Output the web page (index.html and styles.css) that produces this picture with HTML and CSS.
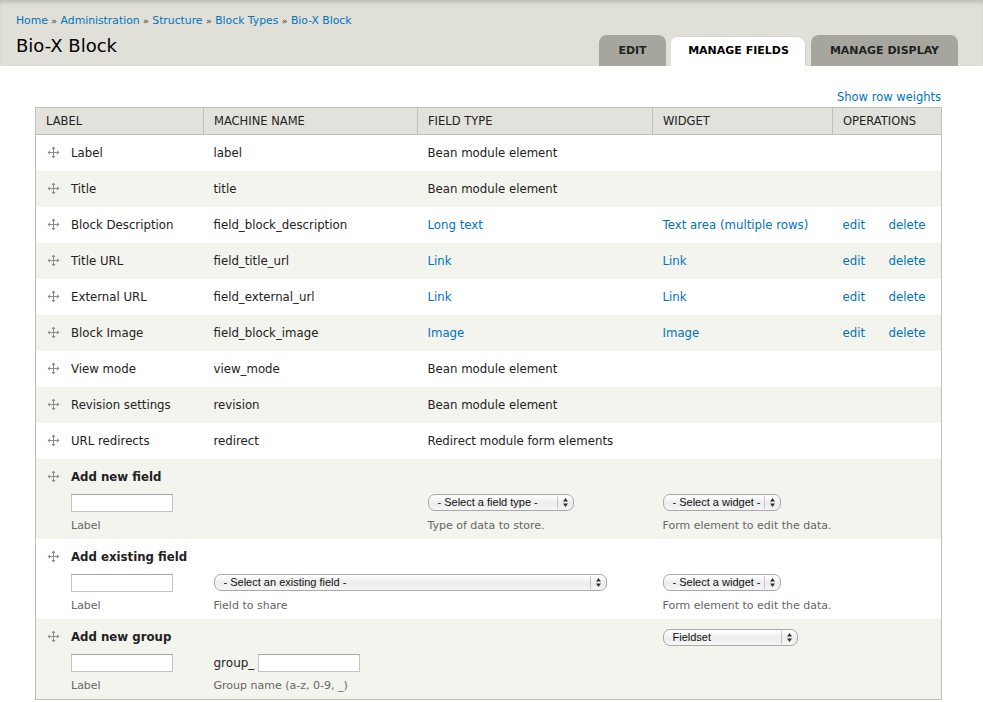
FILE: index.html
```html
<!DOCTYPE html>
<html lang="en">
<head>
<meta charset="utf-8">
<title>Bio-X Block</title>
<link rel="stylesheet" href="styles.css">
</head>
<body>
<header class="head">
  <div class="head-left">
    <nav class="crumbs"><a href="#">Home</a> <span class="sep">»</span> <a href="#">Administration</a> <span class="sep">»</span> <a href="#">Structure</a> <span class="sep">»</span> <a href="#">Block Types</a> <span class="sep">»</span> <a href="#">Bio-X Block</a></nav>
    <h1 class="title">Bio-X Block</h1>
  </div>
  <ul class="tabs">
    <li class="tab t-edit">EDIT</li>
    <li class="tab t-fields active">MANAGE FIELDS</li>
    <li class="tab t-display">MANAGE DISPLAY</li>
  </ul>
</header>
<main class="content">
  <div class="weights"><a href="#">Show row weights</a></div>
  <table class="fields">
    <colgroup><col class="c1"><col class="c2"><col class="c3"><col class="c4"><col class="c5"><col class="c6"></colgroup>
    <thead>
      <tr><th>LABEL</th><th>MACHINE NAME</th><th>FIELD TYPE</th><th>WIDGET</th><th colspan="2">OPERATIONS</th></tr>
    </thead>
    <tbody>
      <tr class="row odd"><td><span class="drag"><svg width="13" height="13" viewBox="0 0 13 13"><path d="M6.5 2.5v8M2.5 6.5h8" stroke="#8c8c8c" stroke-width="1"/><path d="M6.5 0.5L4.5 3h4zM6.5 12.5L4.5 10h4zM0.5 6.5L3 4.5v4zM12.5 6.5L10 4.5v4z" fill="#8c8c8c"/></svg></span>Label</td><td>label</td><td>Bean module element</td><td></td><td></td><td></td></tr>
      <tr class="row even"><td><span class="drag"><svg width="13" height="13" viewBox="0 0 13 13"><path d="M6.5 2.5v8M2.5 6.5h8" stroke="#8c8c8c" stroke-width="1"/><path d="M6.5 0.5L4.5 3h4zM6.5 12.5L4.5 10h4zM0.5 6.5L3 4.5v4zM12.5 6.5L10 4.5v4z" fill="#8c8c8c"/></svg></span>Title</td><td>title</td><td>Bean module element</td><td></td><td></td><td></td></tr>
      <tr class="row odd"><td><span class="drag"><svg width="13" height="13" viewBox="0 0 13 13"><path d="M6.5 2.5v8M2.5 6.5h8" stroke="#8c8c8c" stroke-width="1"/><path d="M6.5 0.5L4.5 3h4zM6.5 12.5L4.5 10h4zM0.5 6.5L3 4.5v4zM12.5 6.5L10 4.5v4z" fill="#8c8c8c"/></svg></span>Block Description</td><td>field_block_description</td><td><a href="#">Long text</a></td><td><a href="#">Text area (multiple rows)</a></td><td><a href="#">edit</a></td><td><a href="#">delete</a></td></tr>
      <tr class="row even"><td><span class="drag"><svg width="13" height="13" viewBox="0 0 13 13"><path d="M6.5 2.5v8M2.5 6.5h8" stroke="#8c8c8c" stroke-width="1"/><path d="M6.5 0.5L4.5 3h4zM6.5 12.5L4.5 10h4zM0.5 6.5L3 4.5v4zM12.5 6.5L10 4.5v4z" fill="#8c8c8c"/></svg></span>Title URL</td><td>field_title_url</td><td><a href="#">Link</a></td><td><a href="#">Link</a></td><td><a href="#">edit</a></td><td><a href="#">delete</a></td></tr>
      <tr class="row odd"><td><span class="drag"><svg width="13" height="13" viewBox="0 0 13 13"><path d="M6.5 2.5v8M2.5 6.5h8" stroke="#8c8c8c" stroke-width="1"/><path d="M6.5 0.5L4.5 3h4zM6.5 12.5L4.5 10h4zM0.5 6.5L3 4.5v4zM12.5 6.5L10 4.5v4z" fill="#8c8c8c"/></svg></span>External URL</td><td>field_external_url</td><td><a href="#">Link</a></td><td><a href="#">Link</a></td><td><a href="#">edit</a></td><td><a href="#">delete</a></td></tr>
      <tr class="row even"><td><span class="drag"><svg width="13" height="13" viewBox="0 0 13 13"><path d="M6.5 2.5v8M2.5 6.5h8" stroke="#8c8c8c" stroke-width="1"/><path d="M6.5 0.5L4.5 3h4zM6.5 12.5L4.5 10h4zM0.5 6.5L3 4.5v4zM12.5 6.5L10 4.5v4z" fill="#8c8c8c"/></svg></span>Block Image</td><td>field_block_image</td><td><a href="#">Image</a></td><td><a href="#">Image</a></td><td><a href="#">edit</a></td><td><a href="#">delete</a></td></tr>
      <tr class="row odd"><td><span class="drag"><svg width="13" height="13" viewBox="0 0 13 13"><path d="M6.5 2.5v8M2.5 6.5h8" stroke="#8c8c8c" stroke-width="1"/><path d="M6.5 0.5L4.5 3h4zM6.5 12.5L4.5 10h4zM0.5 6.5L3 4.5v4zM12.5 6.5L10 4.5v4z" fill="#8c8c8c"/></svg></span>View mode</td><td>view_mode</td><td>Bean module element</td><td></td><td></td><td></td></tr>
      <tr class="row even"><td><span class="drag"><svg width="13" height="13" viewBox="0 0 13 13"><path d="M6.5 2.5v8M2.5 6.5h8" stroke="#8c8c8c" stroke-width="1"/><path d="M6.5 0.5L4.5 3h4zM6.5 12.5L4.5 10h4zM0.5 6.5L3 4.5v4zM12.5 6.5L10 4.5v4z" fill="#8c8c8c"/></svg></span>Revision settings</td><td>revision</td><td>Bean module element</td><td></td><td></td><td></td></tr>
      <tr class="row odd"><td><span class="drag"><svg width="13" height="13" viewBox="0 0 13 13"><path d="M6.5 2.5v8M2.5 6.5h8" stroke="#8c8c8c" stroke-width="1"/><path d="M6.5 0.5L4.5 3h4zM6.5 12.5L4.5 10h4zM0.5 6.5L3 4.5v4zM12.5 6.5L10 4.5v4z" fill="#8c8c8c"/></svg></span>URL redirects</td><td>redirect</td><td>Redirect module form elements</td><td></td><td></td><td></td></tr>

      <tr class="add even">
        <td>
          <div class="add-title"><span class="drag"><svg width="13" height="13" viewBox="0 0 13 13"><path d="M6.5 2.5v8M2.5 6.5h8" stroke="#8c8c8c" stroke-width="1"/><path d="M6.5 0.5L4.5 3h4zM6.5 12.5L4.5 10h4zM0.5 6.5L3 4.5v4zM12.5 6.5L10 4.5v4z" fill="#8c8c8c"/></svg></span>Add new field</div>
          <div class="indent"><input class="txt" type="text"><div class="desc">Label</div></div>
        </td>
        <td></td>
        <td class="ctl"><span class="sel w146"><select><option>- Select a field type -</option></select><svg class="arr" width="5" height="9" viewBox="0 0 5 9"><path d="M2.5 0L0 3.5h5zM2.5 9L0 5.5h5z" fill="#333"/></svg></span><div class="desc">Type of data to store.</div></td>
        <td class="ctl"><span class="sel w118"><select><option>- Select a widget -</option></select><svg class="arr" width="5" height="9" viewBox="0 0 5 9"><path d="M2.5 0L0 3.5h5zM2.5 9L0 5.5h5z" fill="#333"/></svg></span><div class="desc">Form element to edit the data.</div></td>
        <td></td><td></td>
      </tr>
      <tr class="add odd">
        <td>
          <div class="add-title"><span class="drag"><svg width="13" height="13" viewBox="0 0 13 13"><path d="M6.5 2.5v8M2.5 6.5h8" stroke="#8c8c8c" stroke-width="1"/><path d="M6.5 0.5L4.5 3h4zM6.5 12.5L4.5 10h4zM0.5 6.5L3 4.5v4zM12.5 6.5L10 4.5v4z" fill="#8c8c8c"/></svg></span>Add existing field</div>
          <div class="indent"><input class="txt" type="text"><div class="desc">Label</div></div>
        </td>
        <td class="ctl" colspan="2"><span class="sel w393"><select><option>- Select an existing field -</option></select><svg class="arr" width="5" height="9" viewBox="0 0 5 9"><path d="M2.5 0L0 3.5h5zM2.5 9L0 5.5h5z" fill="#333"/></svg></span><div class="desc">Field to share</div></td>
        <td class="ctl"><span class="sel w118"><select><option>- Select a widget -</option></select><svg class="arr" width="5" height="9" viewBox="0 0 5 9"><path d="M2.5 0L0 3.5h5zM2.5 9L0 5.5h5z" fill="#333"/></svg></span><div class="desc">Form element to edit the data.</div></td>
        <td></td><td></td>
      </tr>
      <tr class="add even">
        <td>
          <div class="add-title"><span class="drag"><svg width="13" height="13" viewBox="0 0 13 13"><path d="M6.5 2.5v8M2.5 6.5h8" stroke="#8c8c8c" stroke-width="1"/><path d="M6.5 0.5L4.5 3h4zM6.5 12.5L4.5 10h4zM0.5 6.5L3 4.5v4zM12.5 6.5L10 4.5v4z" fill="#8c8c8c"/></svg></span>Add new group</div>
          <div class="indent"><input class="txt" type="text"><div class="desc">Label</div></div>
        </td>
        <td class="ctl" colspan="2"><div class="prefixed"><span class="prefix">group_</span><input class="txt" type="text"></div><div class="desc">Group name (a-z, 0-9, _)</div></td>
        <td class="ctl top"><span class="sel w135"><select><option>Fieldset</option></select><svg class="arr" width="5" height="9" viewBox="0 0 5 9"><path d="M2.5 0L0 3.5h5zM2.5 9L0 5.5h5z" fill="#333"/></svg></span></td>
        <td></td><td></td>
      </tr>
    </tbody>
  </table>
</main>
</body>
</html>
```

FILE: styles.css
```css
html, body {
  margin: 0;
  padding: 0;
  background: #fff;
}
body {
  font-family: "DejaVu Sans", Verdana, sans-serif;
  font-size: 11.75px;
  color: #222;
}
a {
  color: #0074bd;
  text-decoration: none;
}

/* Header */
.head {
  height: 66px;
  background: #e0e0d8;
  box-shadow: inset 0 4px 4px -2px rgba(0, 0, 0, 0.18);
  display: flex;
  justify-content: space-between;
  align-items: flex-end;
  padding: 0 25px 0 16px;
}
.head-left {
  align-self: flex-start;
}
.crumbs {
  padding-top: 14px;
  line-height: 14px;
  font-size: 10.8px;
}
.crumbs .sep {
  color: #4a3a20;
  font-size: 9.5px;
}
.title {
  margin: 6px 0 0;
  font-size: 18px;
  font-weight: normal;
  line-height: 24px;
  color: #000;
}
.tabs {
  list-style: none;
  margin: 0;
  padding: 0;
  display: flex;
  gap: 5px;
  align-items: flex-end;
}
.tab {
  height: 31px;
  line-height: 32px;
  text-align: center;
  background: #a6a69e;
  border-radius: 8px 8px 0 0;
  font-size: 11px;
  font-weight: bold;
  color: #222;
}
.t-edit { width: 67px; }
.t-fields { width: 135px; }
.t-display { width: 147px; }
.tab.active {
  height: 30px;
  line-height: 30px;
  background: #fff;
  color: #000;
  box-shadow: inset -1px 1px 0 #d6d6ce;
}

/* Content */
.content {
  padding: 24px 42px 0 35px;
}
.weights {
  text-align: right;
  line-height: 14px;
  margin-bottom: 3px;
  font-size: 11.5px;
}
.fields {
  width: 906px;
  table-layout: fixed;
  border-collapse: collapse;
  border: 1px solid #bebfb9;
}
.c1 { width: 168px; }
.c2 { width: 214px; }
.c3 { width: 235px; }
.c4 { width: 180px; }
.c5 { width: 46px; }
.c6 { width: 63px; }
.fields th {
  height: 26px;
  padding: 0 10px;
  background: #e1e2dc;
  border-right: 1px solid #bebfb9;
  border-bottom: 1px solid #bebfb9;
  text-align: left;
  font-weight: normal;
  font-size: 11.5px;
  color: #222;
}
.fields td {
  padding: 0 10px;
  vertical-align: middle;
  white-space: nowrap;
}
.row td {
  height: 36px;
}
.odd { background: #fff; }
.even { background: #f3f4ee; }
.drag {
  display: inline-block;
  width: 13px;
  height: 13px;
  margin-right: 11px;
  vertical-align: -2px;
}
.drag svg {
  display: block;
}
.fields td:first-child {
  padding-left: 11px;
}

/* Add rows */
.add td {
  vertical-align: top;
  padding-top: 10px;
  padding-bottom: 6px;
}
.add-title {
  line-height: 17px;
  font-weight: bold;
  margin-bottom: 8px;
}
.indent {
  padding-left: 24px;
}
.add td.ctl {
  padding-top: 35px;
}
.add td.ctl.top {
  padding-top: 10px;
}
.txt {
  display: block;
  box-sizing: border-box;
  width: 102px;
  height: 18px;
  margin: 0;
  border: 1px solid #c4c4c4;
  border-top-color: #a8a8a8;
  background: #fff;
  padding: 0 2px;
}
.desc {
  margin-top: 7px;
  line-height: 14px;
  font-size: 11px;
  color: #666;
}
.sel {
  position: relative;
  display: block;
  height: 17px;
  margin-bottom: 8px;
}
.sel + .desc {
  margin-top: 0;
}
.sel select {
  appearance: none;
  -webkit-appearance: none;
  box-sizing: border-box;
  width: 100%;
  height: 17px;
  margin: 0;
  padding: 0 20px 0 9px;
  border: 1px solid #a9a9a9;
  border-radius: 7px;
  background: linear-gradient(#ffffff, #ececec 55%, #f6f6f6);
  font-family: "Liberation Sans", Arial, sans-serif;
  font-size: 11px;
  line-height: 15px;
  color: #111;
}
.sel::after {
  content: "";
  position: absolute;
  right: 16px;
  top: 2px;
  bottom: 2px;
  border-left: 1px solid #c6c6c6;
}
.arr {
  position: absolute;
  right: 6px;
  top: 4px;
}
.w146 { width: 146px; }
.w118 { width: 118px; }
.w393 { width: 393px; }
.w135 { width: 135px; }
.prefixed {
  display: flex;
  align-items: center;
  gap: 4px;
  height: 18px;
  font-size: 12px;
}
.prefixed .txt {
  width: 102px;
}
```
